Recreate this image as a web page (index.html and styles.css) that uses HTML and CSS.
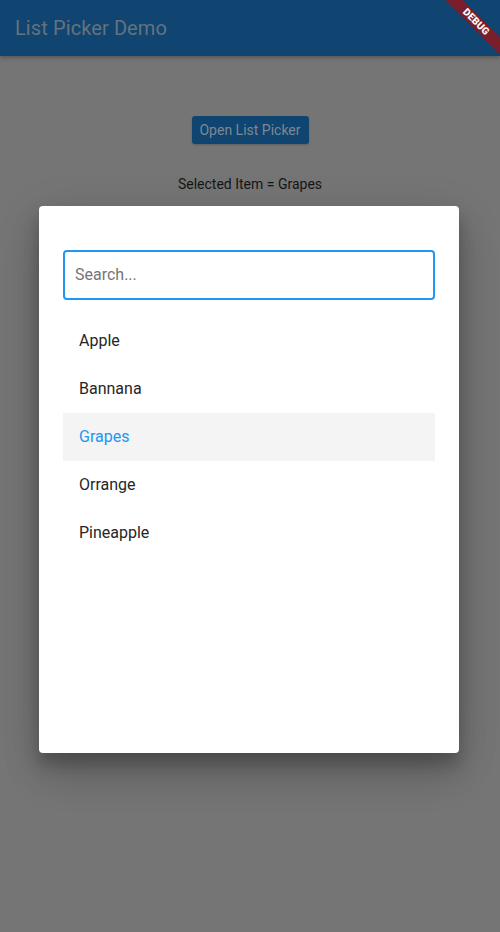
FILE: index.html
```html
<!DOCTYPE html>
<html>
<head>
<meta charset="utf-8">
<link rel="stylesheet" href="styles.css">
</head>
<body>
<div class="screen">
  <header class="appbar">
    <h1 class="title">List Picker Demo</h1>
  </header>
  <main class="content">
    <button class="open-btn">Open List Picker</button>
    <p class="selected">Selected Item = Grapes</p>
  </main>
  <div class="debug-banner"><span>DEBUG</span></div>
  <div class="dialog">
    <div class="search">Search...</div>
    <ul class="list">
      <li class="item">Apple</li>
      <li class="item">Bannana</li>
      <li class="item active">Grapes</li>
      <li class="item">Orrange</li>
      <li class="item">Pineapple</li>
    </ul>
  </div>
</div>
</body>
</html>
```
FILE: styles.css
```css
* { box-sizing: border-box; }
html, body { margin: 0; padding: 0; }
body {
  font-family: Roboto, "Liberation Sans", sans-serif;
  background: #757575;
  width: 500px;
  height: 932px;
  overflow: hidden;
}
.screen {
  position: relative;
  width: 500px;
  height: 932px;
  background: #757575;
}
.appbar {
  height: 56px;
  background: #0f4570;
  display: flex;
  align-items: center;
  padding-left: 15px;
  box-shadow: 0 2px 4px rgba(0,0,0,0.25);
}
.title {
  margin: 0;
  font-size: 20px;
  font-weight: 400;
  color: #65727e;
  letter-spacing: 0.1px;
}
.content {
  display: flex;
  flex-direction: column;
  align-items: center;
  padding-top: 60px;
}
.open-btn {
  height: 28px;
  width: 117px;
  padding: 0;
  border: none;
  border-radius: 3px;
  background: #0f4570;
  color: #7d8893;
  font-family: Roboto, "Liberation Sans", sans-serif;
  font-size: 14px;
  font-weight: 400;
  box-shadow: 0 1px 2px rgba(0,0,0,0.2);
}
.selected {
  margin: 30px 0 0;
  font-size: 14px;
  color: #161616;
  line-height: 20px;
}
.debug-banner {
  position: absolute;
  top: 16px;
  right: -26px;
  width: 100px;
  height: 12px;
  background: #7b1e2c;
  transform: rotate(45deg);
  display: flex;
  align-items: center;
  justify-content: center;
}
.debug-banner span {
  color: #fff;
  font-size: 10px;
  font-weight: 900;
  line-height: 12px;
  letter-spacing: 0.2px;
}
.dialog {
  position: absolute;
  left: 39px;
  top: 206px;
  width: 420px;
  height: 547px;
  background: #fff;
  border-radius: 4px;
  box-shadow: 0 11px 15px rgba(0,0,0,0.2), 0 24px 38px rgba(0,0,0,0.14), 0 9px 46px rgba(0,0,0,0.12);
  padding: 44px 24px 24px;
}
.search {
  height: 50px;
  border: 2px solid #2196f3;
  border-radius: 4px;
  padding: 0 10px 2px;
  display: flex;
  align-items: center;
  font-size: 16px;
  color: #757575;
}
.list {
  list-style: none;
  margin: 17px 0 0;
  padding: 0;
}
.item {
  height: 48px;
  display: flex;
  align-items: center;
  padding-left: 16px;
  padding-bottom: 2px;
  font-size: 16px;
  color: #262626;
}
.item.active {
  background: #f4f4f4;
  color: #2196f3;
}
```
